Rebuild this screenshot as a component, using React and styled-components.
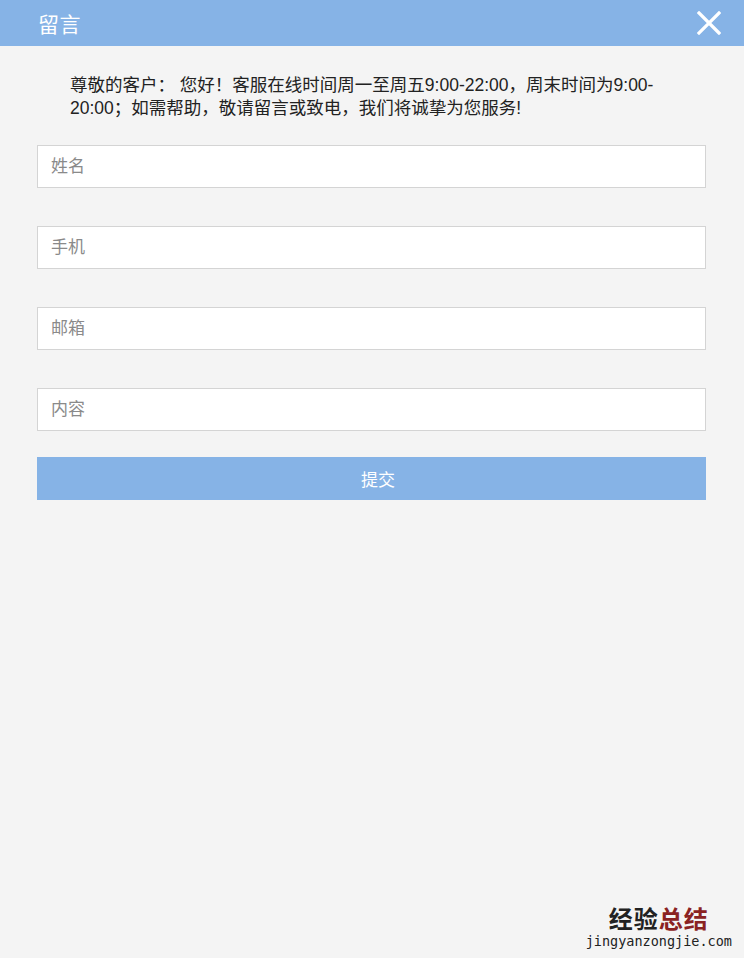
import React from "react";
import styled, { createGlobalStyle } from "styled-components";

const Global = createGlobalStyle`
  html, body { margin: 0; padding: 0; background: #f4f4f4; }
  * { box-sizing: border-box; }
  body { font-family: "Liberation Sans", "Noto Sans CJK SC", sans-serif; }
`;

const Page = styled.div`
  position: relative;
  width: 744px;
  min-height: 958px;
  background: #f4f4f4;
  display: flex;
  flex-direction: column;
`;

const Header = styled.header`
  height: 46px;
  background: #86b3e6;
  display: flex;
  align-items: center;
  justify-content: space-between;
  padding: 0 22px 0 38px;
`;

const Title = styled.h1`
  margin: 0;
  font-size: 21px;
  font-weight: 400;
  color: #fff;
  letter-spacing: 0.5px;
`;

const CloseBtn = styled.button`
  border: 0;
  background: none;
  padding: 0;
  width: 26px;
  height: 26px;
  display: flex;
  align-items: center;
  justify-content: center;
  cursor: pointer;
`;

const Notice = styled.p`
  margin: 28px 84px 0 70px;
  font-size: 17.5px;
  line-height: 23px;
  color: #222;
`;

const Form = styled.form`
  display: flex;
  flex-direction: column;
  gap: 38px;
  padding: 0 38px 0 37px;
  margin-top: 25px;
`;

const Field = styled.input`
  height: 43px;
  width: 100%;
  border: 1px solid #d4d4d4;
  background: #fff;
  padding: 0 13px;
  font-family: inherit;
  font-size: 17px;
  color: #333;
  outline: none;
  &::placeholder { color: #8a8a8a; }
`;

const Submit = styled.button`
  height: 43px;
  width: 100%;
  border: 0;
  background: #86b3e6;
  color: #fff;
  font-family: inherit;
  font-size: 17px;
  padding: 0 0 0 13px;
  margin-top: -12px;
  cursor: pointer;
`;

const Watermark = styled.div`
  position: absolute;
  right: 12px;
  bottom: 8px;
  display: flex;
  flex-direction: column;
  align-items: center;
`;

const WmTitle = styled.div`
  font-family: "Noto Sans CJK SC", sans-serif;
  font-size: 24px;
  font-weight: 700;
  letter-spacing: 1px;
  color: #222;
  line-height: 28px;
`;

const WmRed = styled.span`
  color: #8a2222;
`;

const WmUrl = styled.div`
  font-family: "DejaVu Sans Mono", monospace;
  font-size: 13.5px;
  color: #222;
  line-height: 18px;
`;

export default function App() {
  return (
    <Page>
      <Global />
      <Header>
        <Title>留言</Title>
        <CloseBtn aria-label="关闭">
          <svg width="24" height="24" viewBox="0 0 24 24">
            <path d="M2 2 L22 22 M22 2 L2 22" stroke="#fff" strokeWidth="3.2" strokeLinecap="square" />
          </svg>
        </CloseBtn>
      </Header>
      <Notice>
        尊敬的客户： 您好！客服在线时间周一至周五9:00-22:00，周末时间为9:00-20:00；如需帮助，敬请留言或致电，我们将诚挚为您服务!
      </Notice>
      <Form onSubmit={(e) => e.preventDefault()}>
        <Field placeholder="姓名" />
        <Field placeholder="手机" />
        <Field placeholder="邮箱" />
        <Field placeholder="内容" />
        <Submit type="submit">提交</Submit>
      </Form>
      <Watermark>
        <WmTitle>经验<WmRed>总结</WmRed></WmTitle>
        <WmUrl>jingyanzongjie.com</WmUrl>
      </Watermark>
    </Page>
  );
}
